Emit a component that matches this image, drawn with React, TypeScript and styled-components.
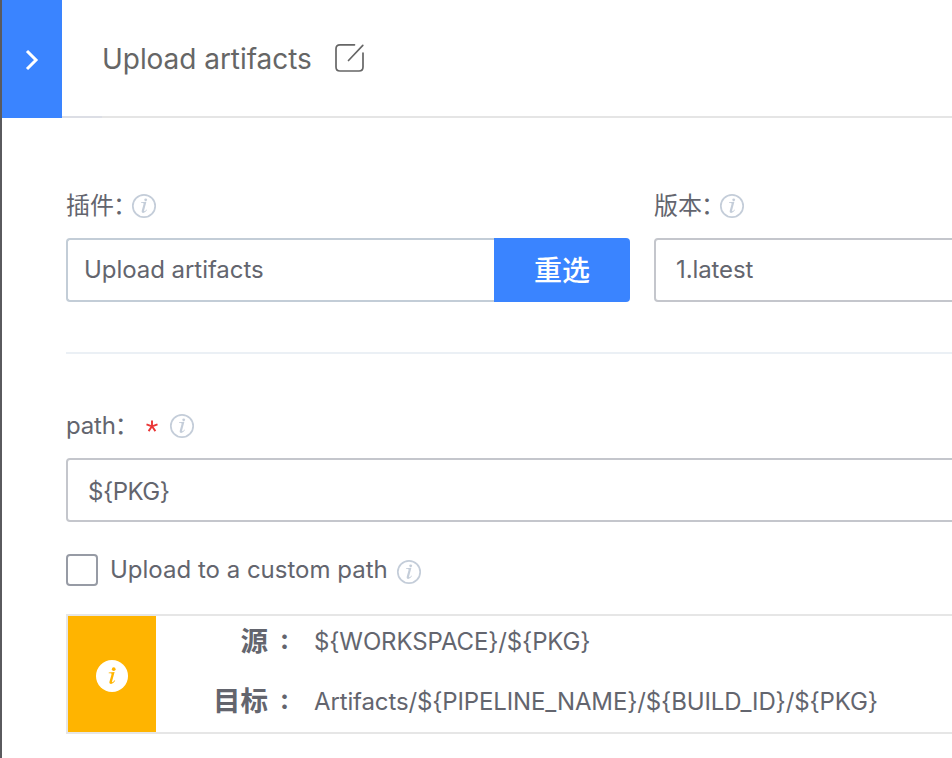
import React from "react";
import styled, { createGlobalStyle } from "styled-components";

const GlobalStyle = createGlobalStyle`
  * { box-sizing: border-box; }
  html, body { margin: 0; padding: 0; background: #fff; overflow: hidden; }
  body { font-family: Inter, "Noto Sans CJK SC", sans-serif; color: #63656e; }
`;

const Panel = styled.main`
  width: 952px;
  height: 758px;
  overflow: hidden;
  background: #fff;
  border-left: 2px solid #5a5a5e;
`;

const Header = styled.header`
  display: flex;
  height: 118px;
`;

const CollapseButton = styled.button`
  display: flex;
  align-items: center;
  justify-content: center;
  width: 60px;
  padding: 1px 0 0;
  border: 0;
  background: #3a84ff;
`;

const HeaderEdge = styled.div`
  width: 40px;
  border-bottom: 2px solid #dcdee5;
`;

const TitleBar = styled.div`
  display: flex;
  flex: 1;
  align-items: center;
  gap: 23px;
  border-bottom: 2px solid #e5e5e5;
`;

const Title = styled.h1`
  width: 209px;
  margin: 0;
  padding-top: 1px;
  font-size: 28px;
  font-weight: 400;
  line-height: 36px;
  letter-spacing: -0.05px;
  color: #666;
  white-space: nowrap;
`;

const Form = styled.div`
  display: flex;
  flex-direction: column;
  padding: 72px 0 0 64px;
`;

const FieldRow = styled.div`
  display: grid;
  grid-template-columns: 564px 564px;
  gap: 24px;
`;

const Field = styled.div<{ $wide?: boolean }>`
  display: flex;
  flex-direction: column;
  gap: 16px;
  width: ${(p) => (p.$wide ? "1152px" : "auto")};
`;

const Label = styled.div`
  display: flex;
  align-items: center;
  height: 32px;
  font-size: 24px;
  line-height: 32px;
  white-space: nowrap;
`;

const LabelText = styled.span<{ $width: number; $spacing?: number; $raise?: number }>`
  width: ${(p) => p.$width}px;
  padding-bottom: ${(p) => p.$raise ?? 0}px;
  letter-spacing: ${(p) => p.$spacing ?? 0}px;
`;

const LabelColon = styled.span`
  margin-left: -1px;
`;

const Required = styled.span`
  display: flex;
  width: 23px;
`;

const Control = styled.div`
  display: flex;
  height: 64px;
`;

const Box = styled.div<{ $tone: string; $indent: number; $spacing: number; $joined?: boolean; $drop?: number }>`
  flex: 1;
  padding-left: ${(p) => p.$indent}px;
  padding-top: ${(p) => p.$drop ?? 0}px;
  border: 2px solid ${(p) => p.$tone};
  border-right-width: ${(p) => (p.$joined ? 0 : 2)}px;
  border-radius: ${(p) => (p.$joined ? "4px 0 0 4px" : "4px")};
  font-size: 24px;
  line-height: 60px;
  letter-spacing: ${(p) => p.$spacing}px;
  white-space: nowrap;
`;

const ReselectButton = styled.button`
  width: 136px;
  padding: 0 0 2px;
  border: 0;
  border-radius: 0 4px 4px 0;
  background: #3a84ff;
  color: #fff;
  font: 500 28px/62px "Noto Sans CJK SC", sans-serif;
`;

const Divider = styled.div`
  height: 2px;
  margin: 50px 0 56px;
  background: #ebf0f5;
`;

const CheckRow = styled.div`
  display: flex;
  align-items: center;
  height: 32px;
  margin: 32px 0 28px;
  font-size: 24px;
  white-space: nowrap;
`;

const Checkbox = styled.span`
  width: 32px;
  height: 32px;
  margin-right: 12px;
  border: 2px solid #979ba5;
  border-radius: 4px;
`;

const CheckIcon = styled.span`
  display: flex;
  padding-top: 4px;
`;

const Notice = styled.section`
  display: flex;
  width: 1152px;
  height: 120px;
  border: 2px solid #e6e6e6;
`;

const NoticeFlag = styled.div`
  display: flex;
  align-items: center;
  justify-content: center;
  width: 88px;
  padding-top: 3px;
  background: #ffb400;
`;

const NoticeRows = styled.div`
  display: grid;
  grid-template-rows: 60px 60px;
  margin-top: -4px;
`;

const NoticeRow = styled.div`
  display: grid;
  grid-template-columns: 112px 46px auto;
  align-items: center;
  white-space: nowrap;
`;

const NoticeKey = styled.strong`
  padding-bottom: 6px;
  text-align: right;
  font: 700 27.5px/40px "Noto Sans CJK SC", sans-serif;
`;

const NoticeColon = styled.strong`
  padding: 0 0 4px 12px;
  font: 700 27px/40px Inter, sans-serif;
`;

const NoticeValue = styled.span<{ $spacing: number }>`
  font-size: 24px;
  line-height: 40px;
  letter-spacing: ${(p) => p.$spacing}px;
`;

const I_STEM = "M8.6 9.3 13.9 8.8 11.7 17.1Q11.3 18.5 12.1 18.3 12.9 18 13.9 16.5L14.5 17Q12.6 19.9 10.7 19.9 8.7 19.9 9.3 17.6L11.1 11.1Q11.4 10 10.1 10L8.5 10Z";

const InfoIcon = () => (
  <svg width="26" height="26" viewBox="0 0 26 26">
    <circle cx="13" cy="13" r="11.2" fill="none" stroke="#c4cdd9" strokeWidth="1.7" />
    <g fill="#c4cdd9" transform="translate(1.5 0)">
      <path d={I_STEM} />
      <circle cx="13.2" cy="6.8" r="1.4" />
    </g>
  </svg>
);

const NoticeIcon = () => (
  <svg width="32" height="32" viewBox="0 0 32 32">
    <circle cx="16" cy="16" r="16" fill="#fff" />
    <g fill="#ffb400" transform="translate(3.3 2.6) scale(1.1 1.07)">
      <path d={I_STEM} />
      <circle cx="13.1" cy="6.1" r="1.7" />
    </g>
  </svg>
);

const Chevron = () => (
  <svg width="16" height="24" viewBox="0 0 16 24" fill="none" stroke="#fff" strokeWidth="3">
    <path d="M3 3 12 12 3 21" />
  </svg>
);

const EditIcon = () => (
  <svg width="32" height="32" viewBox="0 0 32 32" fill="none" stroke="#666" strokeWidth="1.7" strokeLinecap="round">
    <path d="M20.5 2.8H6Q2 2.8 2 6.8V25Q2 29 6 29H25Q29 29 29 25V11M14.5 18.5 28.8 3.4" />
  </svg>
);

const Asterisk = () => (
  <svg width="12" height="12" viewBox="0 0 12 12" fill="none" stroke="#ea3636" strokeWidth="1.9">
    <path d="M6 6.3V.4M6 6.3 .5 4.4M6 6.3 2.6 11.1M6 6.3 9.4 11.1M6 6.3 11.5 4.4" />
  </svg>
);

export default function App() {
  return (
    <>
      <GlobalStyle />
      <Panel>
        <Header>
          <CollapseButton aria-label="Collapse"><Chevron /></CollapseButton>
          <HeaderEdge />
          <TitleBar>
            <Title>Upload artifacts</Title>
            <EditIcon />
          </TitleBar>
        </Header>
        <Form>
          <FieldRow>
            <Field>
              <Label><LabelText $width={65}>插件<LabelColon>：</LabelColon></LabelText><InfoIcon /></Label>
              <Control>
                <Box $tone="#c3cdd7" $indent={16} $spacing={-0.05} $joined>Upload artifacts</Box>
                <ReselectButton>重选</ReselectButton>
              </Control>
            </Field>
            <Field>
              <Label><LabelText $width={65}>版本<LabelColon>：</LabelColon></LabelText><InfoIcon /></Label>
              <Control><Box $tone="#c4c6cc" $indent={20} $spacing={-0.1}>1.latest</Box></Control>
            </Field>
          </FieldRow>
          <Divider />
          <Field $wide>
            <Label>
              <LabelText $width={80} $spacing={-0.2}>path<LabelColon>：</LabelColon></LabelText>
              <Required><Asterisk /></Required>
              <InfoIcon />
            </Label>
            <Control><Box $tone="#c4c6cc" $indent={20} $spacing={-0.5} $drop={2}>{"${PKG}"}</Box></Control>
          </Field>
          <CheckRow>
            <Checkbox />
            <LabelText $width={286} $raise={2}>Upload to a custom path</LabelText>
            <CheckIcon><InfoIcon /></CheckIcon>
          </CheckRow>
          <Notice>
            <NoticeFlag><NoticeIcon /></NoticeFlag>
            <NoticeRows>
              <NoticeRow>
                <NoticeKey>源</NoticeKey>
                <NoticeColon>:</NoticeColon>
                <NoticeValue $spacing={-0.13}>{"${WORKSPACE}/${PKG}"}</NoticeValue>
              </NoticeRow>
              <NoticeRow>
                <NoticeKey>目标</NoticeKey>
                <NoticeColon>:</NoticeColon>
                <NoticeValue $spacing={-0.13}>{"Artifacts/${PIPELINE_NAME}/${BUILD_ID}/${PKG}"}</NoticeValue>
              </NoticeRow>
            </NoticeRows>
          </Notice>
        </Form>
      </Panel>
    </>
  );
}
